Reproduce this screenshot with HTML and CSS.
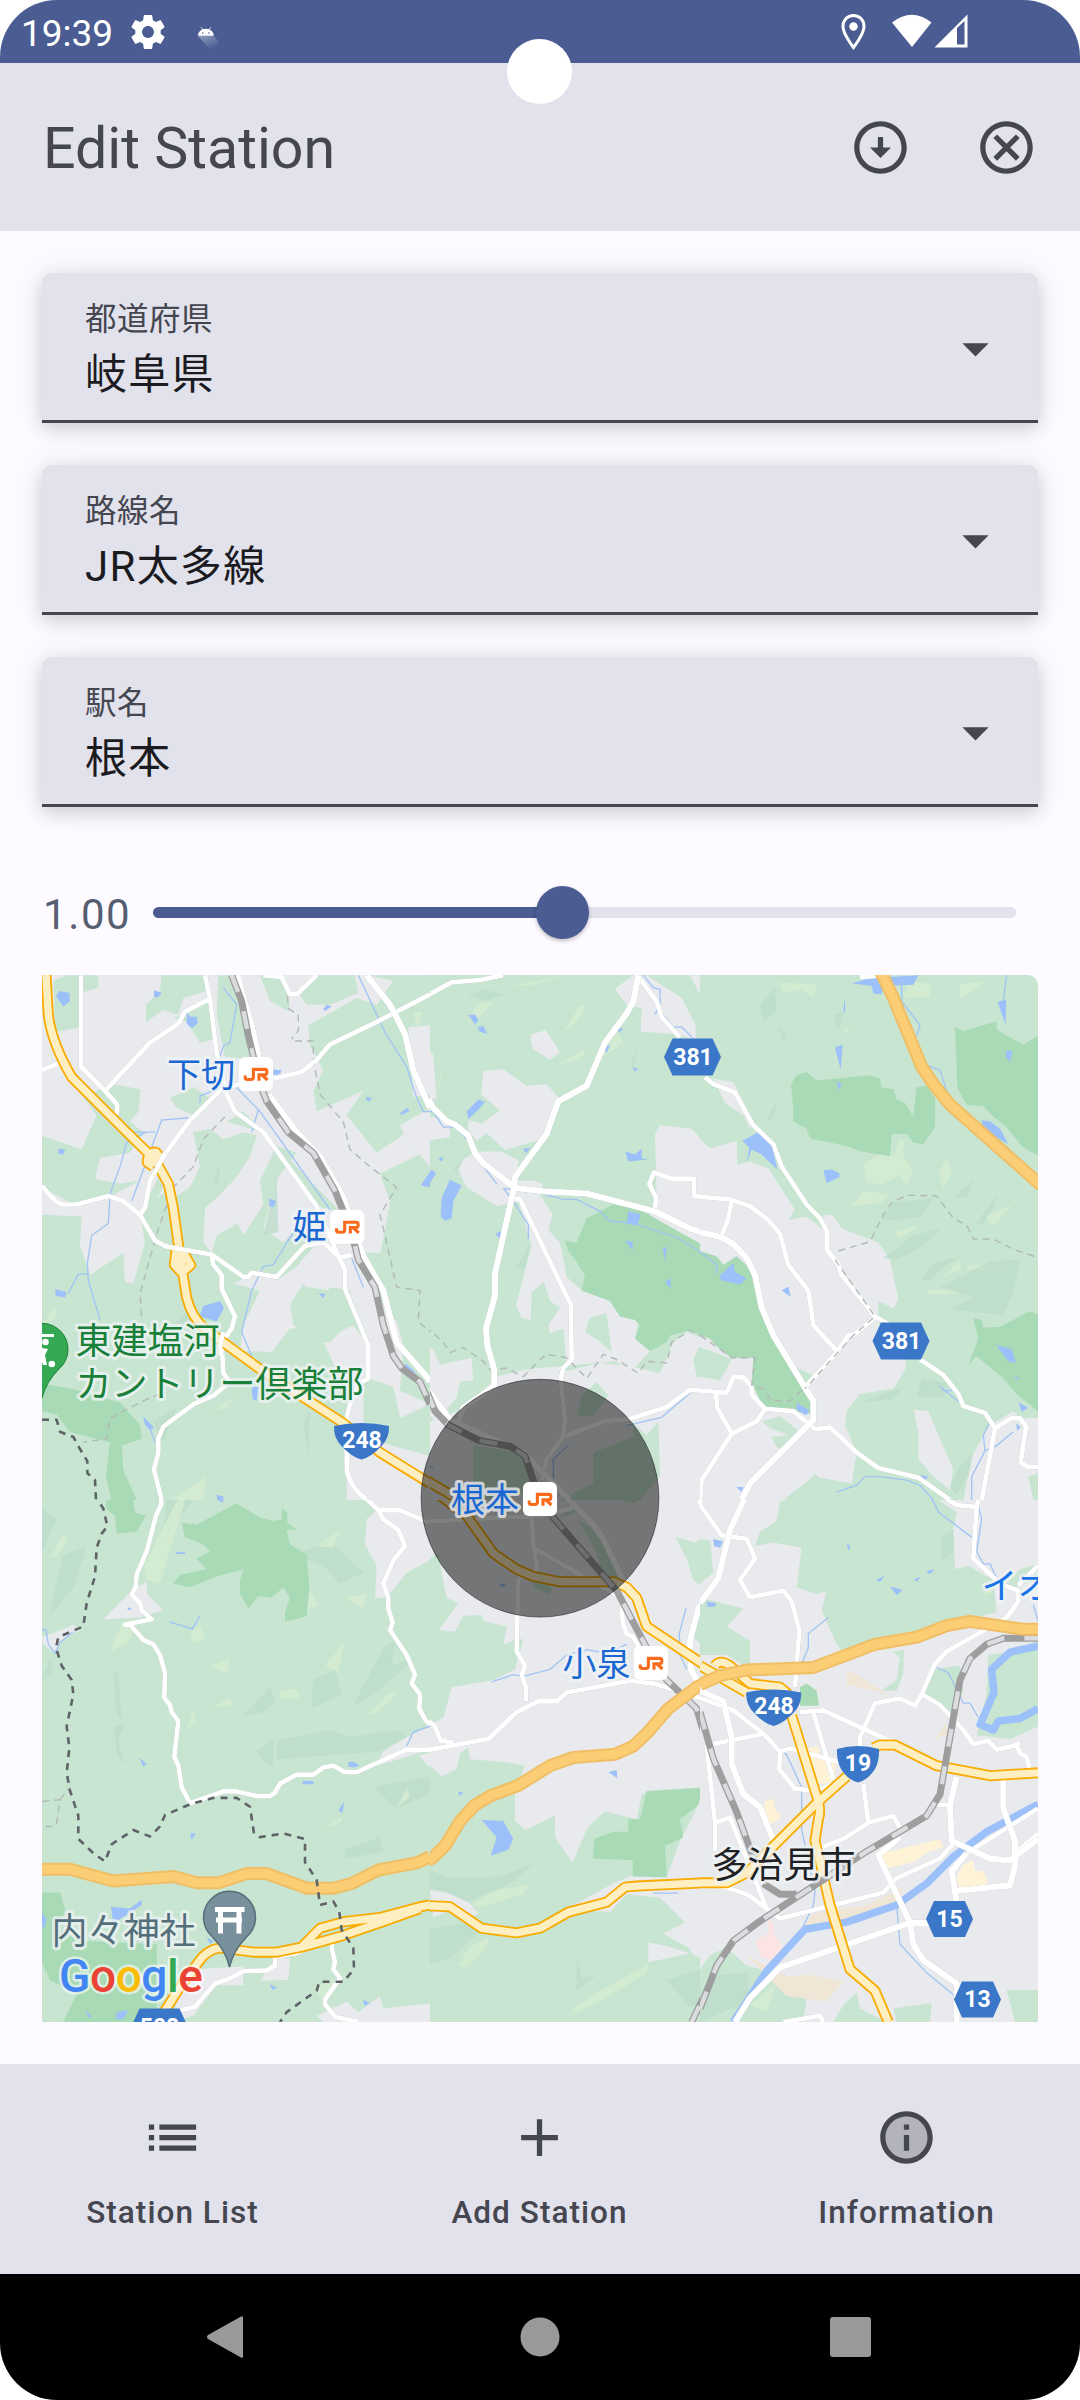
FILE: index.html
```html
<!DOCTYPE html>
<html lang="ja">
<head>
<meta charset="utf-8">
<title>Edit Station</title>
<link rel="stylesheet" href="styles.css">
</head>
<body>
<div class="screen">
  <header class="status">
    <span class="clock">19:39</span>
    <svg class="gear" viewBox="2 2 20 20"><path fill-rule="evenodd" d="M19.43 12.98c.04-.32.07-.64.07-.98s-.03-.66-.07-.98l2.11-1.65c.19-.15.24-.42.12-.64l-2-3.46c-.12-.22-.39-.3-.61-.22l-2.49 1c-.52-.4-1.08-.73-1.69-.98l-.38-2.65C14.46 2.18 14.25 2 14 2h-4c-.25 0-.46.18-.49.42l-.38 2.65c-.61.25-1.17.59-1.69.98l-2.49-1c-.23-.09-.49 0-.61.22l-2 3.46c-.13.22-.07.49.12.64l2.11 1.65c-.04.32-.07.65-.07.98s.03.66.07.98l-2.11 1.65c-.19.15-.24.42-.12.64l2 3.46c.12.22.39.3.61.22l2.49-1c.52.4 1.08.73 1.69.98l.38 2.65c.03.24.24.42.49.42h4c.25 0 .46-.18.49-.42l.38-2.65c.61-.25 1.17-.59 1.69-.98l2.49 1c.23.09.49 0 .61-.22l2-3.46c.12-.22.07-.49-.12-.64l-2.11-1.65zM12 15.5c-1.93 0-3.5-1.57-3.5-3.5s1.57-3.5 3.5-3.5 3.5 1.57 3.5 3.5-1.57 3.5-3.5 3.5z"/></svg>
    <svg class="droid" viewBox="0 0 26 26"><defs><linearGradient id="fade" x1="0" y1="0" x2=".7" y2="1"><stop offset="0" stop-color="#fff" stop-opacity=".4"/><stop offset="1" stop-color="#fff" stop-opacity="0"/></linearGradient></defs><path fill="url(#fade)" d="M1 11L19 11L25 18L20 26H14Z"/><path d="M1 11a9 8 0 0 1 18 0z"/><path d="M4.500 1.500l3 4M15.500 1.500l-3 4" stroke="#fff"/><circle cx="6.500" cy="8" r=".9" fill="#4a5c92"/><circle cx="13.500" cy="8" r=".9" fill="#4a5c92"/></svg>
    <svg class="sys" viewBox="0 0 128 36"><path d="M13.500 1.500C7.500 1.500 3 6 3 12.500C3 20 13.500 33.500 13.500 33.500S24 20 24 12.500C24 6 19.500 1.500 13.500 1.500Z" fill="none" stroke="#fff" stroke-width="3"/><circle cx="13.500" cy="12.500" r="4.200"/><path d="M52 8.500Q72 -7 91.500 8.500L72 33Z"/><path fill-rule="evenodd" d="M94.500 33.500L127.500 .5V33.500ZM117 14V30.500H124.500V7Z"/></svg>
    <i class="camera"></i>
  </header>

  <div class="appbar">
    <h1>Edit Station</h1>
    <svg class="ico" viewBox="0 0 24 24"><path d="M12 4c4.410 0 8 3.590 8 8s-3.590 8-8 8-8-3.590-8-8 3.590-8 8-8m0-2C6.480 2 2 6.480 2 12s4.480 10 10 10 10-4.480 10-10S17.520 2 12 2zm1 10V8h-2v4H8l4 4 4-4h-3z"/></svg>
    <svg class="ico" viewBox="0 0 24 24"><path d="M12 2C6.470 2 2 6.470 2 12s4.470 10 10 10 10-4.470 10-10S17.530 2 12 2zm0 18c-4.410 0-8-3.590-8-8s3.590-8 8-8 8 3.590 8 8-3.590 8-8 8zm3.590-13L12 10.590 8.410 7 7 8.410 10.590 12 7 15.590 8.410 17 12 13.410 15.590 17 17 15.590 13.410 12 17 8.410z"/></svg>
  </div>

  <main>
    <div class="field"><div><label>都道府県</label><p>岐阜県</p></div><svg class="ico" viewBox="0 0 24 24"><path d="M7 10l5 5 5-5z"/></svg></div>
    <div class="field"><div><label>路線名</label><p>JR太多線</p></div><svg class="ico" viewBox="0 0 24 24"><path d="M7 10l5 5 5-5z"/></svg></div>
    <div class="field"><div><label>駅名</label><p>根本</p></div><svg class="ico" viewBox="0 0 24 24"><path d="M7 10l5 5 5-5z"/></svg></div>

    <div class="range"><span>1.00</span><div class="track"><div class="done"></div><div class="thumb"></div></div></div>

    <svg class="map" viewBox="42 975 996 1047">
      <defs>
        <g id="jr"><rect x="-17" y="-17" width="34" height="34" rx="6" fill="#fff"/><path d="M-10.800 1.500V3.200Q-10.800 5.500-8.500 5.500H-5Q-2.600 5.500-2.600 3V-4.600H8.800Q10.800-4.600 10.800-2.800V-1.200Q10.800.7 8.800.7H3V6.800M6 1L11.500 6" fill="none" stroke="#f96b1c" stroke-width="3.100"/></g>
        <path id="hex3" d="M-20-18.500H20L28.500 0L20 18.500H-20L-28.500 0Z"/>
        <path id="hex2" d="M-15.500-18H15.500L23.500 0L15.500 18H-15.500L-23.500 0Z"/>
        <path id="shield3" d="M-27.500-15Q-14-18 0-18T27.500-15Q28-3 20 5Q10 16 0 18.500Q-10 16-20 5Q-28-3-27.500-15Z"/>
        <path id="shield2" d="M-21-15Q-11-18 0-18T21-15Q21.500-3 17 5Q10 16 0 18.500Q-10 16-17 5Q-21.500-3-21-15Z"/>
        <path id="y-cs" d="M40 0L130 50L200 100L280 205L350 250L400 270L480 285H640L680 300L710 330L740 410L900 510L960 545L1050 590M940 530Q945 505 990 520L1050 555M0 1212L90 1192L150 1195L245 1255L350 1268L420 1255L505 1210L620 1182L675 1140L710 1137L980 1125L1050 1090"/>
        <path id="h-cs" d="M0 1085L50 1078L95 1060L135 1025L180 955L225 910L270 885L355 855L450 800L520 777L645 768L700 745L740 710L805 640L890 580L960 548L1050 532"/>
        <path id="r-cs" d="M455 100L650 310L740 470L800 560L890 640L950 830L1050 1050M875 1518L950 1370L1000 1290L1050 1260"/>
        <path id="y-cn" d="M0 1465L130 1540L180 1568"/>
        <path id="r-cn" d="M0 1175L75 1240L105 1310L145 1350L235 1395L330 1412L375 1440L410 1540"/>
        <path id="y-ws" d="M1150 0L1200 25M395 1500L450 1420L505 1350Q530 1315 570 1310L670 1322H740L815 1308L870 1255L940 1237L1050 1225L1170 1195L1200 1190M815 1308L930 1278L1050 1240L1170 1200"/>
        <path id="h-ws" d="M36 1090H120L250 1123L430 1110L500 1128H565L650 1102H710L830 1143H910L965 1130L1045 1092L1160 1072L1200 1055"/>
        <path id="y-wn" d="M48 44L55 160Q65 240 125 340L290 500L375 580L415 650L430 720L450 860L470 980Q485 1040 530 1075L700 1195L940 1345L1050 1430L1200 1520M370 600L352 588Q352 556 378 558L394 578M440 830L433 885L455 908L482 886L458 845"/>
        <path id="r-wn" d="M605 44L635 120L655 220L670 280L690 360L710 410L775 500L850 560L915 670L940 730L975 830L985 870L1035 950L1060 1060L1090 1150L1115 1185L1170 1225L1200 1290"/>
        <path id="y-es" d="M0 520L140 595M45 520Q60 500 90 520L150 570L240 580L265 600M275 660L350 885Q365 920 355 950L345 1010L390 1190L450 1370L525 1430L565 1518M0 1128H80L140 1100L350 905L440 830M520 750L540 742H585L710 800L870 828L1014 820"/>
        <path id="r-es" d="M0 650L40 780L110 930L165 1070M0 1480L50 1360L100 1290L180 1235L500 1040L680 940L720 880L780 560L810 500L860 460L910 443H1014"/>
        <path id="h-es" d="M0 573L60 548L140 532L340 525L525 460L650 440L740 408L810 396L970 418H1020"/>
        <path id="h-en" d="M535 20L580 110L665 310L700 360L750 420L1024 655"/>
      </defs>

      <!-- centre, south -->
      <svg x="400" y="1480" width="350" height="560" viewBox="0 0 1050 1568" preserveAspectRatio="none">
        <rect class="land" width="1050" height="1568"/>
        <path class="green" d="M220 0H350V30L280 60L220 20ZM500 0H780L775 20L700 65L600 45ZM530 110L600 150L660 285L640 285L600 250L590 200ZM480 105L520 70L530 90ZM390 270L455 300L450 320L400 300ZM0 280L60 235L115 205L125 260L140 330L175 345L117 420L165 425L190 380L245 378L250 395L320 410L310 460L340 450L370 445L345 530L280 560L155 580L130 665L80 690L20 740L0 770ZM0 765L60 760L80 790L125 830L170 810L180 765L205 750L210 782L320 790L375 800L345 870V955L375 980L465 940V1000L517 1070L565 970L615 928L710 950L725 885L740 870L910 860L890 920L840 1010L800 1112L700 1105L640 1130L500 1200L630 1210L680 1160L780 1170L855 1240L790 1270L865 1310L880 1330L960 1360L1050 1330V1518H0ZM825 158L885 175L905 165L935 190V260L920 310L880 280L860 220ZM930 320L1050 365V480L1000 500L930 480L880 440L910 350Z"/>
        <path class="land" d="M90 1148L150 1158L205 1182L238 1215L210 1222L160 1200L100 1225ZM25 1460L75 1467L50 1518H30ZM745 1295L800 1305L870 1325L800 1340L745 1350Z"/>
        <path class="dark" d="M0 1060L150 1115L300 1110L400 1075L330 1130L200 1180L130 1150L0 1130ZM0 1240L60 1260L200 1240L240 1260L150 1340L0 1380ZM530 1345L545 1395L590 1385L530 1430ZM800 1400L900 1370L920 1460L870 1475ZM0 1400L60 1385L80 1440L0 1440Z"/>
        <path class="light" d="M175 1360L205 1310L265 1280L262 1305L200 1365ZM520 1480L600 1430L745 1355L740 1380L620 1450L515 1498ZM210 1190L280 1150L390 1132L370 1160L250 1195ZM0 890L28 870L0 930ZM0 1300L50 1260L40 1350L0 1380Z"/>
        <path class="park" d="M740 872L905 862L895 910L840 950L850 1000L795 1025L800 1112L698 1110V1065L580 1060L582 1005L640 985H685V950L720 950Z"/>
        <path class="water" d="M245 952L310 955L340 1005L325 1035L272 1052L290 1000ZM625 818L650 812L652 835ZM940 165L970 175L960 190L940 185ZM920 340L948 345L945 355L922 355ZM295 290L318 292L308 300ZM175 872L190 875L178 885ZM985 1518L1050 1430V1470L1015 1518Z"/>
        <path class="stream" d="M275 565L340 545L370 550L450 530L500 490L560 475L620 485L680 460M858 358L838 430L840 490L860 530M760 1157H835M1005 1325L1045 1340M0 750L40 705L85 690"/>
        <g class="roads"><path d="M0 765L30 755H90L265 725L350 650L415 620H470L500 595L690 562L760 570L900 610L1000 640L1050 690M0 85L60 118L170 112L420 100L520 78M0 140L15 185L0 205M0 465L45 545L38 570L60 600V635L75 665L105 690L122 730L160 735M355 275L350 480L375 520L365 545L378 580V620M395 105L400 180L412 250L355 275M400 190L560 275L645 320L665 335L668 400L680 430L700 440L735 500M910 0L898 60L962 155H1025L1050 175M1050 270L1020 280V305L1050 335M935 740L1050 718M915 740L945 960L940 1110M945 960L985 945L1050 1090M930 1130L1050 1165"/></g>
        <g class="roads wide"><path d="M450 0L580 125L610 165L680 300L750 400M1050 20L985 160L960 275L895 360L870 450L872 530L890 560L965 620L995 720V795L1035 880L1050 895M690 310L750 400"/></g>
        <use class="y1" href="#y-cs"/><use class="y2" href="#y-cs"/>
        <use class="rail" href="#r-cs"/><use class="tie" href="#r-cs"/>
        <use class="h1" href="#h-cs"/><use class="h2" href="#h-cs"/>
      </svg>

      <!-- centre, north -->
      <svg x="400" y="960" width="350" height="540" viewBox="0 0 1050 1568" preserveAspectRatio="none">
        <rect class="green" width="1050" height="1568"/>
        <path class="land" d="M0 44H50L0 130ZM15 190L60 200L65 245L100 275L110 405L75 400L40 350L5 330ZM390 218L437 203L480 268L450 290L397 258ZM250 322L310 317L380 365L440 360L475 400L445 515L315 552L260 503L230 525L205 495V465L245 475L300 437L243 390ZM0 460L100 455L150 480V515L80 525L35 550L55 590L45 625L0 655ZM185 580L230 557L300 555L355 580L350 640L400 640L430 650L420 680L458 740L445 785L480 820L500 920L545 960L630 990L660 1035L715 1045L705 1100L750 1135L690 1200L650 1165L360 1190L470 1200L500 1180L490 1070L450 1085L445 1060L480 1010L450 990L432 935L395 965L392 1045L365 1040L348 1005L375 900L395 830L355 700L290 715L200 660L175 610ZM0 1090L60 1110L100 1130L120 1175L215 1155L220 1220L180 1225L170 1270L110 1340L0 1250ZM650 80L700 44H740L845 110L887 190V232L830 215L722 208L725 140L680 130L645 85ZM780 480L875 490L930 547L1010 525L1012 595L1050 590V880L1020 860L970 885L935 845L830 805L745 750L770 700L765 505ZM940 345L1000 355L1050 430V490L1020 450L970 415ZM360 1192L470 1200L600 1170L700 1180L780 1200L820 1110L860 1080L910 1100L880 1160L890 1210L960 1218L985 1160L1050 1150V1568H0V1440L80 1400L90 1340L200 1300L290 1210ZM870 44H910L900 100Z"/>
        <path class="green" d="M530 1322L545 1265L590 1225L625 1265L580 1325ZM220 1408L350 1430L400 1480V1540L300 1568H220ZM580 1430L700 1385L700 1345L740 1380L775 1340L780 1500L720 1568H480L580 1520ZM555 1080L568 1040L620 1025L635 1138L595 1105ZM0 1310L80 1360L85 1400L0 1440Z"/>
        <path class="light" d="M37 150L70 150L45 205ZM230 125L285 120L240 165L205 180ZM540 130L560 135L520 190L490 210ZM460 310L560 255L545 285ZM620 250L650 205L670 240L600 285ZM110 370L130 310L120 365ZM330 75L500 44L390 75ZM945 44L1050 44L985 95Z"/>
        <path class="dark" d="M205 102L250 85L310 100L260 118ZM350 890L390 825L375 900ZM695 300L710 250L700 325ZM160 610L205 555L170 615ZM10 700L45 640L20 690Z"/>
        <path class="park" d="M495 815L530 820L560 750L640 710L720 725L940 845L970 885L1020 860L1050 880V1155H985L940 1105L870 1075L810 1090L800 1110L750 1135L705 1100L720 1060L705 1045L660 1035L630 990L545 960L555 915L525 870L505 845Z"/>
        <path class="water" d="M205 160L225 158L235 175L225 187ZM232 195L250 192L262 215L240 208ZM200 440L235 405L255 412L235 435L205 462ZM63 655L95 608L108 620L85 655ZM125 690L150 638L185 655L160 700L155 750L135 757L122 745ZM285 795L305 787V815ZM675 555L705 565L725 548V575L742 580L685 585ZM685 730L722 738L712 772L680 765ZM675 815L698 818V843ZM788 835L800 835L795 875ZM795 935L812 925V955ZM960 915L1000 880L1005 905L1040 925L1020 942L962 930ZM610 255L632 245L620 270ZM655 195L670 200L655 212ZM15 1170L50 1200L35 1205L18 1190ZM1030 525L1050 515V580L1040 585ZM115 578L130 570L125 585ZM0 440L25 430L20 445ZM368 548L390 545L380 562ZM700 310L716 318L702 323ZM1010 1530H1028L1020 1545Z"/>
        <path class="stream" d="M0 280L20 310L45 400L65 440H100L130 485H165L200 520M235 580L290 650M310 663L340 700L385 770L385 810M310 663L430 680L490 695H530L600 730L630 758L700 765L830 805L930 865L950 885V910M730 44L760 80L780 85V130L765 158M790 160L820 195H845L880 228M680 1352L785 1328L870 1257M505 1408L460 1450V1520M60 1455L100 1475"/>
        <path class="admin" d="M0 955L40 948L60 970L50 1040L130 1110L150 1140L190 1125L250 1165L270 1190L320 1185L370 1210L420 1160L440 1145L500 1155L560 1215L610 1145L650 1160L715 1200L740 1165L800 1170L815 1110L870 1075L940 1110L990 1155H1050"/>
        <g class="roads"><path d="M0 145L155 65L240 58L310 44M345 695H360L512 1000L515 1160L490 1185L482 1215L495 1335L488 1385L440 1450L425 1510M720 55L770 120L785 165L840 225M915 340L940 355L1000 385L1050 455M765 725L768 690L748 650L762 617L815 635H882V685L990 695L1050 712M990 700L980 760L965 800M488 1385L620 1338L690 1332L800 1298L870 1248L975 1255L1000 1212H1030L1050 1240M948 1255L950 1290L990 1370L1050 1345M990 1375L905 1515V1568"/></g>
        <g class="roads wide"><path d="M0 185L20 220L45 335L100 430L140 468L165 478L205 510L225 560L250 590L345 662L430 672L560 678L765 730L875 782L965 805L1000 825L1035 860L1050 890M715 44L700 120L680 155L615 240L560 365L475 410L440 505L345 630L342 662L285 910V975L258 1070L262 1120L283 1190V1235L265 1250L190 1300L175 1345M0 1120L70 1205L85 1250L150 1335L370 1430L470 1530L510 1568M1050 1510L1025 1568"/></g>
        <use class="y1" href="#y-cn"/><use class="y2" href="#y-cn"/>
        <use class="rail" href="#r-cn"/><use class="tie" href="#r-cn"/>
      </svg>

      <!-- west, south -->
      <svg x="30" y="1480" width="400" height="560" viewBox="0 0 1200 1568" preserveAspectRatio="none">
        <rect class="green" width="1200" height="1568"/>
        <path class="land" d="M960 0H1200V225L1130 260L1070 330H1035L1040 240L1005 180L1010 110L1040 85ZM350 285L352 320L400 365L330 385L220 390L305 310ZM36 440L80 425L130 405L150 420L90 450L75 485L40 460ZM1130 720L1200 690V755L1040 800L1060 760ZM1165 770L1200 765V805ZM480 1370L640 1362V1415L560 1415L490 1500L420 1518L450 1440ZM740 1335L780 1340L775 1400L690 1402ZM860 1500L950 1460L985 1490L1050 1445L1060 1480L1200 1465V1518H880Z"/>
        <path class="dark" d="M740 730L900 700L960 720L1100 700L1130 720L1040 760L740 782ZM965 640L1060 470L1095 450L1085 520L1150 500L1060 580L960 640ZM640 660L720 580L735 620L700 650ZM250 535L265 540L275 680L258 650ZM680 760L730 725V800L700 790ZM850 560L915 530L935 600L845 640ZM100 210L170 185L130 300L60 380L80 280ZM410 50L490 0H540L400 160ZM940 1035L1050 1000L1060 1040L950 1060ZM1030 860L1200 830V880L1100 920ZM36 560L60 500L70 540ZM790 210L900 170L1000 260L930 290L880 240ZM250 690L285 680L265 730L282 800L262 770ZM36 80L80 110L36 200Z"/>
        <path class="light" d="M1005 660L1070 600L1112 590L1040 650ZM750 590L800 585L812 610L750 612ZM540 640L600 610L610 630ZM340 240L440 60L470 45L390 290L350 280ZM60 220L100 150L115 165L80 215ZM780 350L840 310L865 350L800 375ZM480 430L510 400L525 440L490 460ZM885 520L945 450L925 540ZM240 480L275 400L320 410L290 460ZM470 700L490 640L500 675ZM1100 920L1130 860L1140 885ZM870 980L940 940L930 960ZM540 520L600 500L590 540ZM860 185L930 140L910 190ZM850 1420L950 1385L880 1460ZM940 330L1010 320L1000 360Z"/>
        <path class="park" d="M235 0H300L315 90L348 100L320 145L260 150L255 100L228 80ZM455 120L500 125L620 65L690 105L730 115L755 110V80L772 90V120L800 138L770 140L780 180L830 210L838 300L830 380L800 390L765 395V370L780 330L760 300L725 330L685 325L655 360L630 320V280L640 250L560 270L520 285L480 300L430 290L450 265L530 250L500 220L540 200L520 180L465 160ZM36 1155H90L105 1200L90 1260L150 1290L380 1300V1518H100L140 1440L60 1400L36 1350Z"/>
        <path class="water" d="M560 38L582 48L578 64L562 55ZM243 1195L300 1200L335 1175V1190L250 1242ZM925 925L942 900L938 932ZM955 790L968 788L988 798L975 805L955 802ZM818 843H850V852H818ZM480 990H497L485 1008ZM328 778L350 795L340 802ZM438 202H465V207H438ZM293 358H303V363H293ZM718 1412L742 1422L728 1428ZM1000 1455L1020 1465L1003 1472ZM36 1210L50 1230L42 1255L36 1250ZM260 1490L295 1485L280 1510H258ZM165 1485L185 1500L178 1508ZM530 1280L550 1290L540 1300Z"/>
        <path class="stream" d="M36 420H48L55 460L75 485L90 455L130 425M418 397L487 417L510 380M1200 690L1150 705L1130 745"/>
        <path class="admin" d="M36 900L90 895L80 960L75 970H36M90 895L120 860"/>
        <g class="roads"><path d="M380 0L395 65L378 100L350 200L320 265L317 300L305 320L330 345L335 365L365 390L285 405H300L340 448L370 460L390 490L405 540L403 610L420 630L425 650L445 675L433 775L445 800L455 860L480 905L580 872H620L680 885H720L735 875L750 850L800 825H850L880 805L910 800L945 818H980L1130 755H1200M960 0L985 30L1045 85L1060 110L1105 140L1125 185L1090 225L1060 290L1075 330V360L1088 400L1080 420L1130 490L1155 545L1145 570L1170 600L1168 640L1185 670L1200 685M1045 85H1110L1200 120M450 1485L495 1475L555 1410L600 1395L640 1375L710 1373L735 1360V1335L800 1325L860 1300L910 1280L905 1310L915 1350L910 1370L930 1395L885 1455V1468L915 1503L985 1518"/></g>
        <use class="y1" href="#y-ws"/><use class="y2" href="#y-ws"/>
        <use class="h1" href="#h-ws"/><use class="h2" href="#h-ws"/>
        <path class="border" d="M195 0L198 50L220 80L232 130L215 150L200 190L195 270L170 345L160 410L85 440L78 470L95 520L125 560L130 600L110 690L118 750L110 820L120 870L145 940V1005L190 1045L225 1068L245 1020L310 980L360 998L390 970L405 938L480 908L550 890H620L660 915L672 990L690 1000L760 990L825 1005V1070L860 1120L870 1190L910 1180L928 1210L935 1260L970 1310L972 1370L940 1405H868L860 1430L770 1490L750 1518"/>
      </svg>

      <!-- west, north -->
      <svg x="30" y="960" width="400" height="540" viewBox="0 0 1200 1568" preserveAspectRatio="none">
        <rect class="land" width="1200" height="1568"/>
        <path class="green" d="M70 60L110 44H205V80L155 95L150 195L75 210ZM395 44H520L530 90L460 110L445 160L400 145L348 180V130L390 90ZM430 170L545 120L550 230L510 240L470 180ZM565 44H610L650 200L660 290L585 280L560 160ZM36 510L155 550L200 450L160 400L240 360L332 375L325 440L300 470L340 500L300 560L210 575L195 635L270 650L330 640L235 690L140 715L36 660ZM36 740L155 745L150 830L180 915L280 850L285 935L310 940L345 820L330 740L400 600L430 690L480 660L510 600L490 500L540 490L580 520L645 500L680 510L660 570L600 660L610 740L640 800L700 710L690 640L740 540L800 560L745 630L700 780L760 820L790 790L880 800L800 890L740 930L690 900L610 940L690 960L640 1060L630 1135L725 1138L780 1070L870 1060L850 1000L820 950L840 950L960 970L1015 1100V1230L950 1290V1568H36ZM770 60L780 150L720 120L690 44H740ZM800 90L840 60L870 44H975L985 95L900 130L830 130ZM835 190L980 110L1040 130L1090 60L1010 44H1200V1290L1110 1250L1120 1120L1050 860L1080 700L1050 620L1180 560L1130 500L1040 560L950 450L1000 380L860 440L850 380L880 320L840 250ZM420 400L490 370L540 400L500 455L440 430ZM590 470L640 440L930 730L860 715L700 500ZM1000 850L1060 850L1110 1000L1140 1100L1060 1000Z"/>
        <path class="land" d="M525 720L560 690L620 630L630 760L560 800L545 850L520 820ZM1135 195L1200 190V390L1150 400ZM1110 480L1200 430V600L1130 520ZM380 690L440 600L490 550L480 620L430 660ZM740 960L800 930L850 1000L880 1070H770L700 1120L640 1120L690 1000ZM900 1110L960 1050L1010 1110V1230L950 1250L880 1110ZM950 1400L1100 1450L1200 1480V1568H970Z"/>
        <path class="green" d="M780 1000L820 940L870 1000L900 950L960 960L970 1060L870 1110L790 1060ZM1000 1210L1090 1240L1110 1330L1200 1290V1440L1050 1400L1000 1340Z"/>
        <path class="light" d="M36 1060L75 1005L80 1040ZM540 1310L620 1265L590 1300ZM420 1568L530 1500L520 1568ZM1150 150L1180 150L1160 200Z"/>
        <path class="dark" d="M370 1340L440 1300L400 1400ZM820 1340L840 1310L835 1440ZM550 640L570 590L565 650ZM700 800L740 640L745 790ZM430 1060L480 1010L500 1060Z"/>
        <path class="park" d="M36 1230L150 1250L270 1285L330 1350L335 1390L275 1410L280 1480L320 1568H245L228 1500L240 1400L180 1385L120 1370L80 1320L36 1310Z"/>
        <path class="water" d="M78 105L88 90L118 95L120 120L100 135ZM372 88L395 95L385 108H372ZM470 150L480 165L500 165L503 185L485 198L470 185ZM85 548L105 550L100 565L85 562ZM718 692L738 700L732 718L718 715ZM520 1005L570 990L582 1010L560 1050L508 1035ZM75 955L110 965L105 980L78 975ZM1172 655L1200 615V660ZM340 1325L372 1358L360 1365L345 1350ZM730 318L755 320L750 332L730 335ZM1005 398L1027 400L1015 412ZM880 143L890 130L905 135L885 148ZM1110 445L1130 430L1140 438L1115 450ZM865 968L885 970L880 982ZM1125 1170L1160 1200L1125 1190ZM665 1240H685L680 1280L668 1275ZM560 1553L580 1558V1568H562Z"/>
        <path class="stream" d="M475 458L395 465L370 530L340 610L305 700M310 500H375M345 502L290 530L270 600L240 680L235 765L185 800L172 880L175 930L210 1045M115 968L145 912H172M620 370L690 440L900 725M985 44L1065 210L1130 310L1160 400L1180 440H1200M790 790L730 885L700 890L665 960L635 1080L665 1150M580 80L620 130L600 240L580 250L570 280M965 865L1000 950M375 1400L360 1360M685 435L665 500M575 370L510 395V415"/>
        <path class="admin" d="M770 70L775 140L805 160V205L785 230M795 235H850L850 290L870 390L940 470L960 550L1020 600L1100 660L1050 740L1065 800L1100 950L1170 960L1165 1050L1200 1080M585 455L520 520L490 600L430 660L385 780L350 900L330 970L335 1040M390 1260L340 1280L240 1330L230 1390L160 1400"/>
        <g class="roads"><path d="M153 44V310L225 380L262 420V440L250 460M36 320L90 298M225 380L360 240L445 185L465 150L540 112M525 44L540 112L560 270L590 390L615 440L700 500L860 715L930 870L945 900V955L1015 1120V1215L985 1230L960 1290L950 1330V1480Q960 1530 1010 1568M630 360L575 375L480 465L415 550L360 640L345 720L330 740M36 655Q70 700 95 710H140L235 685L280 700L330 740L375 815L410 832L545 855L640 920H655L665 908L740 920L825 830L880 820L930 865L965 855M545 860L550 885L575 915V955L615 1035L605 1070L575 1110L580 1200L600 1225L550 1265L490 1290L400 1355L385 1390V1430L372 1480L395 1568M730 345L815 325L860 290L900 245L1030 185L1200 100M700 44L755 50L780 100H800L860 44"/></g>
        <g class="roads wide"><path d="M1010 44L1080 130L1125 215L1150 320L1200 430M622 44L640 110L665 190L690 300M715 390L800 500L870 570L940 690L1000 860L1060 960L1100 1110L1190 1210L1200 1225"/></g>
        <use class="y1" href="#y-wn"/><use class="y2" href="#y-wn"/>
        <g class="roads"><path d="M405 560L370 625M400 830L500 848M580 1080L570 1120L575 1150"/></g>
        <use class="rail" href="#r-wn"/><use class="tie" href="#r-wn"/>
        <path class="border" d="M36 1335H80L90 1370L130 1385L150 1420L172 1455V1490L195 1510L198 1568"/>
      </svg>

      <!-- east, south -->
      <svg x="700" y="1480" width="380" height="560" viewBox="0 0 1140 1568" preserveAspectRatio="none">
        <rect class="land" width="1140" height="1568"/>
        <path class="green" d="M240 60L340 45L310 20L380 0H640L660 20L770 90L760 140L765 250L805 240L880 280L890 370L800 390L650 440L440 495L410 460L365 365L380 310L350 320L290 300L305 190L220 175L165 185L180 145L230 115ZM730 0H800L770 40ZM0 165L30 170L40 260L0 290ZM0 330L130 360L80 410L150 450V530L80 490L0 490ZM580 480L612 475L610 540L590 590L545 590L590 560L600 500ZM700 530L780 520L790 590L760 660L740 640L665 600ZM865 490L930 480L1014 450V690L930 725L830 715L860 600ZM900 310L960 250L1014 235V280ZM0 1370L30 1330L80 1310L140 1360L230 1380L250 1430L320 1450L310 1518H0ZM430 1470L470 1435L480 1480L560 1518H400ZM580 1480L695 1465L690 1518H590ZM920 1428H1014V1518H945Z"/>
        <path class="dark" d="M0 1430L60 1385L140 1380L150 1470L90 1480L0 1518ZM725 160L760 140L762 200L725 230Z"/><path class="light" d="M150 1470L230 1410L200 1490ZM840 330L880 290L875 315Z"/>
        <path class="park" d="M300 580L320 570L350 590L357 632H300Z"/>
        <path class="shop" d="M325 750L355 745L360 775L410 780L400 850H350ZM193 900L220 892L225 925L243 935L240 950L205 965L225 985L195 960ZM525 1050L720 1005L730 1028L690 1040L640 1070L550 1090ZM770 1110L790 1075L820 1065L825 1095L850 1095L865 1130L780 1150Z"/>
        <path class="sand" d="M440 530L480 550L570 605L530 590L440 575ZM310 1250L340 1215L430 1200L500 1190L610 1140L600 1180L500 1215L380 1245ZM140 1330L260 1390L330 1385L430 1405L380 1460L260 1445L200 1390ZM705 725L735 680L745 710Z"/>
        <path class="rose" d="M165 1290L205 1270V1230L218 1240L225 1275L250 1310L210 1345L185 1335Z"/>
        <path class="river" d="M100 1518L200 1375L315 1258L440 1238L590 1190L680 1130L760 1055L860 985L1014 908M1014 465L930 482L875 530L882 595L840 685L880 700L895 675L960 668L1014 640"/>
        <path class="water" d="M40 165L70 172L60 190L42 185ZM528 280L555 268L540 285ZM570 298L608 308L590 322ZM678 255L705 250L690 264ZM440 178L450 185L447 200ZM20 340L48 345L45 355L22 355ZM642 278L662 270L650 285Z"/>
        <path class="stream" d="M620 0L700 60L715 90L815 160M815 0L845 110L830 200L850 235H870L890 275M385 385L325 430V470L285 560M180 700L260 770L305 860V980L345 1150L340 1190L300 1270M590 1190L600 1300L680 1380L765 1445M410 32L470 10L500 0M710 525L745 540L790 625H810L835 665M1000 350L1014 395"/>
        <g class="roads"><path d="M10 0L0 70L65 155L140 165L165 220L120 280L150 328L250 310L275 340L298 420L285 580M655 0L770 70L830 75M850 0L830 75L820 220L900 290L955 310V340L920 385L740 480L705 515L665 600L720 630L790 700L820 740L865 730L890 755L940 745L960 735M950 745L960 765L980 775L990 815M665 600L645 632L600 612L525 625L480 720V760M1014 240L955 295M0 610L100 645L190 710L240 760L238 810L285 865L350 870L400 850M35 740L185 712M240 760L270 752L420 790M300 650L370 645L580 735M340 650L400 840M490 850L505 960L430 1005L360 1030M505 960L580 940L600 975M20 740L45 960V1040M45 960L90 945L200 1200M0 1130Q100 1140 150 1165L240 1228L550 1155L590 1115L720 1060L760 1018M710 910H745M250 1518L360 1500L370 1518M800 1045L1014 920M1014 990L945 1045"/></g>
        <g class="roads wide"><path d="M160 0L90 140L55 275L0 345M0 590L70 620L95 720V795L130 880L180 915L225 1020M770 830L750 910L755 1010L870 1060L930 1065L1014 1005M800 1045L755 1095L770 1180M910 840V920L945 1010V1080L930 1135L770 1150M600 1000L535 1050L630 1240L640 1300L670 1345L770 1410V1518M105 1518L150 1450L240 1365L630 1240H690"/></g>
        <use class="y1" href="#y-es"/><use class="y2" href="#y-es"/>
        <path class="rail" d="M190 1130L240 1160H290"/><use class="rail" href="#r-es"/><use class="tie" href="#r-es"/>
        <use class="h1" href="#h-es"/><use class="h2" href="#h-es"/>
      </svg>

      <!-- east, north -->
      <svg x="700" y="960" width="380" height="540" viewBox="0 0 1140 1568" preserveAspectRatio="none">
        <rect class="green" width="1140" height="1568"/>
        <path class="land" d="M0 520L30 547L110 525L112 595L150 585L205 605L285 725L265 755L320 745L365 780L370 740L400 742L425 780L535 820L570 870L595 985L580 1012L535 990V1055L620 1160L615 1190L580 1245L480 1260L440 1310L435 1350L470 1430L455 1520L340 1500L250 1568H0ZM40 345L100 355L145 440L152 495L130 450L75 415ZM870 1350L940 1310L960 1330H1014V1490L985 1500L1000 1568H790L815 1440ZM640 1305L685 1310L760 1480L750 1540L700 1500L655 1450V1370Z"/>
        <path class="green" d="M185 1340L240 1325L300 1370L250 1420L230 1415L215 1385L265 1380L210 1358ZM290 1568L345 1490L365 1515L340 1560L460 1520L500 1568ZM0 1125L60 1145L95 1160L60 1220L0 1210ZM290 1185L340 1205L325 1240Z"/>
        <path class="light" d="M490 595L540 560L600 570L590 630L540 655L500 640ZM595 525L612 520L610 570L640 610L620 650L575 600ZM455 715L490 670L570 680L545 705ZM715 620L740 575L755 615L730 665ZM235 65L350 70L340 110L300 85L250 95ZM610 110L630 60L690 70V108H660ZM780 70L860 60L780 115ZM580 790L660 770L600 810ZM850 745L940 710L880 770ZM800 885L915 885L880 905L805 900ZM680 960L790 955L770 970L690 972ZM730 920L780 870L785 895ZM430 205L460 190L435 215Z"/>
        <path class="dark" d="M545 755L580 705L700 692L660 745L590 755ZM550 865L640 800L720 780L670 830L590 870ZM660 930L700 880L780 860L720 900L690 930ZM720 950L870 875L960 870L940 960L910 1030L750 1015L820 980ZM830 765L890 680L880 720L850 765ZM400 160L430 150L415 205ZM235 195L260 215L250 240ZM200 460L235 405L215 470ZM180 130L225 80L230 150L190 180ZM650 1270L665 1215L740 1230L735 1270ZM480 1285L610 1240L580 1275ZM780 1470L820 1430L805 1500L770 1550L750 1530ZM760 690L820 640L800 690Z"/>
        <path class="park" d="M0 845L50 860L70 885L110 860L155 900L165 935L175 1010L310 1230L345 1290L340 1320L280 1310L195 1305L155 1230L160 1155H95L60 1130L30 1100L0 1090ZM273 360L290 335L320 325L350 350L510 335L540 345L545 370L580 375L590 405L615 415L640 455L650 370L680 365L705 400V485L670 535L640 530L620 505H575L570 570L480 555L440 540L330 518L320 490L280 470V430ZM765 195L790 207L890 178V200L920 220L970 245L1014 220V568L970 545L915 480L880 455L850 425L800 420L772 370L770 300ZM820 1040L845 1045L850 1068L900 1065L990 1020L1014 1030V1310L950 1260L910 1215L830 1150L805 1175L835 1100Z"/>
        <path class="water" d="M127 525L175 500L215 535L232 608L185 565L155 550L140 588L148 545ZM370 610L395 608L418 620V630L380 648ZM455 68L500 55L560 50L655 44L640 72L550 75L545 100L520 97L515 75ZM405 255L428 245L422 318ZM893 122L918 115L917 188ZM918 262L938 265L930 295L918 285ZM845 465L870 468L900 490L925 535L880 510L848 485ZM60 915L100 880L105 905L140 925L120 942L62 930ZM245 960L265 948L272 978ZM888 1117L935 1130L948 1170L925 1165ZM955 1285L985 1300L965 1312ZM290 1285L328 1308L318 1322L290 1305ZM660 1495L685 1500L675 1512ZM412 350L425 362L415 378ZM434 105L436 150H430ZM108 1530H130L125 1545ZM940 1210L960 1213L950 1218ZM948 1345L962 1355L952 1368Z"/>
        <path class="stream" d="M605 44V120L660 190L650 220M680 305L720 320L740 380L765 430L790 478M920 44L910 115M0 848L50 885V910M410 1545L470 1525L495 1500H540L620 1510L660 1525L700 1568M815 1568V1500L855 1425L850 1380L870 1340M855 1425L890 1410L940 1370M770 1250H735L720 1240L780 1285"/>
        <g class="roads"><path d="M15 340L40 360L105 385L160 480L220 535L245 600L320 710L360 750L380 785V840L415 885L425 915L525 1035L570 1060M660 1160L730 1205L775 1260L790 1295L855 1315L885 1360L870 1440L845 1568M885 1360L935 1330H960L978 1355L962 1460L985 1472H1014M0 688L90 695L150 715L205 755L240 795L265 885L325 960L340 1060L410 1135M95 700L85 750L65 800M525 1038L460 1090H445L410 1140L315 1240M0 1250L80 1257L100 1212H130L155 1240V1262L195 1303L280 1310L345 1362L390 1357L470 1430L535 1475L655 1503L750 1568M48 1257L52 1300L95 1375L170 1340L195 1303M95 1375L5 1510L0 1568M480 50L530 46"/></g>
        <g class="roads wide"><path d="M0 790L65 805L100 825L140 865L165 915L185 1010L220 1090L320 1250L340 1280V1335L150 1520L125 1568"/></g>
        <path class="admin" d="M415 845L510 818L550 740L575 705L620 683L710 685L760 750L800 770L820 810H880L940 840L1014 864M405 870L525 1035L460 1090L315 1245M0 1090L60 1130L95 1155H165L155 1235L190 1245L215 1280H270L310 1245"/>
        <use class="h1" href="#h-en"/><use class="h2" href="#h-en"/>
      </svg>

      <circle cx="540" cy="1498.200" r="118.900" fill="#000" fill-opacity=".5" stroke="#000" stroke-opacity=".45" stroke-width="1"/>

      <use href="#jr" x="256" y="1074"/><use href="#jr" x="347.300" y="1226.800"/><use href="#jr" x="540" y="1499"/><use href="#jr" x="651" y="1663"/>

      <g class="badge"><use href="#hex3" x="692.500" y="1057"/><use href="#hex3" x="901" y="1341"/><use href="#hex3" x="159.500" y="2027"/><use href="#hex2" x="949.500" y="1919"/><use href="#hex2" x="977.500" y="1999.500"/><use href="#shield3" x="361.500" y="1441"/><use href="#shield3" x="773.700" y="1707.500"/><use href="#shield2" x="858" y="1764"/></g>
      <g class="num"><text x="693" y="1065">381</text><text x="901.500" y="1349">381</text><text x="159.500" y="2035">508</text><text x="949.500" y="1926.500">15</text><text x="977.500" y="2007">13</text><text x="362" y="1447.500">248</text><text x="774" y="1714">248</text><text x="858" y="1771">19</text></g>

      <path d="M42 1398Q38 1382 25 1369A26 26 0 1 1 59 1369Q46 1382 42 1398Z" fill="#34a853" stroke="#188038"/>
      <path d="M38 1335.500H54" stroke="#fff" stroke-width="3"/><g fill="#fff"><circle cx="45.500" cy="1342" r="3.300"/><circle cx="51.800" cy="1364" r="3.300"/><path d="M42 1348L48 1349L45 1355L47 1365H43L42 1362Z"/></g>
      <path d="M229.500 1967Q226 1951 212.500 1937A26 26 0 1 1 246.500 1937Q233 1951 229.500 1967Z" fill="#78909c" stroke="#546e7a" stroke-width="1.500"/>
      <path d="M215 1909.500H244.500M216 1920H242M220.500 1909V1933.500M239 1909V1933.500" fill="none" stroke="#fff" stroke-width="5"/>

      <g class="place blue"><text x="167" y="1087">下切</text><text x="292.500" y="1239">姫</text><text x="451" y="1512">根本</text><text x="562.500" y="1675.500">小泉</text></g>
      <g class="place big"><text class="gr" x="75.500" y="1354">東建塩河</text><text class="gr" x="75.500" y="1397">カントリー倶楽部</text><text class="sl" x="51.500" y="1944">内々神社</text><text class="bk" x="711.500" y="1878">多治見市</text><text class="br" x="981.500" y="1599">イオン</text></g>
      <text class="brand" x="59" y="1992" textLength="144"><tspan fill="#4285f4">G</tspan><tspan fill="#ea4335">o</tspan><tspan fill="#fbbc04">o</tspan><tspan fill="#4285f4">g</tspan><tspan fill="#34a853">l</tspan><tspan fill="#ea4335">e</tspan></text>
    </svg>
  </main>

  <nav class="tabs">
    <div><svg class="ico" viewBox="0 0 24 24"><path d="M3 13h2v-2H3v2zm0 4h2v-2H3v2zm0-8h2V7H3v2zm4 4h14v-2H7v2zm0 4h14v-2H7v2zM7 7v2h14V7H7z"/></svg><span>Station List</span></div>
    <div><svg class="ico" viewBox="0 0 24 24"><path d="M19 13h-6v6h-2v-6H5v-2h6V5h2v6h6v2z"/></svg><span>Add Station</span></div>
    <div><svg class="ico" viewBox="0 0 24 24"><circle cx="12" cy="12" r="9" fill-opacity=".3"/><path d="M11 7h2v2h-2zm0 4h2v6h-2zm1-9C6.480 2 2 6.480 2 12s4.480 10 10 10 10-4.480 10-10S17.520 2 12 2zm0 18c-4.410 0-8-3.590-8-8s3.590-8 8-8 8 3.590 8 8-3.590 8-8 8z"/></svg><span>Information</span></div>
  </nav>

  <footer class="sysnav">
    <svg viewBox="0 0 38 44"><path d="M37 2.500V41.500Q37 43.500 35 42.500L2 24Q0 22 2 20L35 1.500Q37 .5 37 2.500Z"/></svg>
    <svg viewBox="0 0 40 44"><circle cx="20" cy="22" r="19.500"/></svg>
    <svg viewBox="0 0 41 44"><rect y="2" width="41" height="40" rx="3"/></svg>
  </footer>
</div>
</body>
</html>
```
FILE: styles.css
```css
* { box-sizing: border-box; }
body { margin: 0; background: #fff; font-family: Roboto, "Noto Sans CJK JP", sans-serif; color: #45464f; }
.screen { width: 1080px; height: 2400px; border-radius: 57px; overflow: hidden; background: #fdfbff; display: flex; flex-direction: column; }

.status { position: relative; height: 63px; background: #4a5c92; display: flex; align-items: center; padding-left: 21px; fill: #fff; }
.clock { color: #fff; font-size: 37px; line-height: 43px; width: 110px; padding-top: 3px; }
.gear { width: 34px; height: 34px; }
.droid { width: 23px; height: 23px; margin-left: 32px; margin-top: 11px; }
.sys { width: 128px; height: 36px; margin-left: auto; margin-right: 112px; }
.camera { position: absolute; left: 507px; top: 39px; width: 65px; height: 65px; border-radius: 50%; background: #fff; }

.ico { width: 63px; height: 63px; fill: #45464f; display: block; }
.appbar { height: 168px; background: #e1e2ec; display: flex; align-items: center; padding: 0 42px 0 43px; gap: 63px; }
.appbar h1 { margin: 0; flex: 1; font-size: 57.300px; font-weight: 400; line-height: 74px; padding-top: 3px; }

main { padding: 42px 42px 0; height: 1833px; display: flex; flex-direction: column; }
.field { height: 150px; margin-bottom: 42px; background: #e1e2ec; border-radius: 10px 10px 0 0; border-bottom: 3px solid #45464f; box-shadow: 0 6px 18px rgba(0,0,0,.15), 0 0 36px rgba(0,0,0,.08); display: flex; align-items: center; justify-content: space-between; padding: 3px 31px 0 43px; }
.field div { height: 105px; margin-top: 3px; }
.field label { display: block; font-size: 31.500px; line-height: 45px; letter-spacing: .5px; }
.field p { margin: 0; font-size: 42px; line-height: 65px; letter-spacing: 1.300px; color: #1b1b1f; }

.range { height: 126px; display: flex; align-items: center; }
.range span { width: 111px; font-size: 42px; letter-spacing: 1.600px; color: #585e71; padding: 4px 0 0 1px; }
.track { position: relative; width: 863px; height: 11px; border-radius: 6px; background: #e1e2ec; }
.done { width: 410px; height: 11px; border-radius: 6px; background: #4a5c92; }
.thumb { position: absolute; left: 383px; top: -21px; width: 53px; height: 53px; border-radius: 50%; background: #4a5c92; box-shadow: 0 2px 4px rgba(0,0,0,.25); }

.map { flex: none; width: 996px; height: 1047px; display: block; border-radius: 0 10px 0 0; }
.map path { vector-effect: non-scaling-stroke; }
.land { fill: #e8eaed; }
.green { fill: #c7e5d1; }
.park { fill: #a8dab5; }
.dark { fill: #bcdbc8; opacity: .75; }
.light { fill: #d3ebd0; opacity: .9; }
.water { fill: #9cc0f9; }
.shop { fill: #fef3d6; }
.sand { fill: #f0e6d5; }
.rose { fill: #fce4e4; }
.stream { fill: none; stroke: #a1c3f5; stroke-width: 1.300; }
.river { fill: none; stroke: #9cc0f9; stroke-width: 7.500; stroke-linejoin: round; }
.roads { fill: none; stroke: #fff; stroke-width: 4.700; stroke-linejoin: round; filter: drop-shadow(0 .5px .4px rgba(120,125,130,.55)); }
.roads.wide { stroke-width: 6.200; }
.y1, .y2, .h1, .h2, .rail, .tie, .border, .admin { fill: none; stroke-linejoin: round; }
.y1 { stroke: #f9ab00; stroke-width: 11; }
.y2 { stroke: #feefc3; stroke-width: 7.400; }
.h1 { stroke: #f0bf65; stroke-width: 13; }
.h2 { stroke: #fbcd75; stroke-width: 9; }
.rail { stroke: #9e9e9e; stroke-width: 7; }
.tie { stroke: #dadce0; stroke-width: 4.400; stroke-dasharray: 18 20; }
.border { stroke: #5f6368; stroke-width: 2.600; stroke-dasharray: 7 6; }
.admin { stroke: #b3b9b7; stroke-width: 1.400; stroke-dasharray: 7 5; }
.badge { fill: #3a77c8; }
.num { fill: #fff; font: 700 23px Roboto, sans-serif; text-anchor: middle; }
.place { font-family: "Noto Sans CJK JP", sans-serif; font-size: 34px; stroke: rgba(240,244,246,.75); stroke-width: 6px; stroke-linejoin: round; paint-order: stroke; }
.place.big { font-size: 36px; }
.blue { fill: #1967d2; }
.gr { fill: #188038; }
.sl { fill: #546e7a; }
.bk { fill: #202124; }
.br { fill: #1a73e8; }
.brand { font: 500 46px Roboto, sans-serif; stroke: rgba(255,255,255,.6); stroke-width: 5px; stroke-linejoin: round; paint-order: stroke; }

.tabs { height: 210px; background: #e1e2ec; display: grid; grid-template-columns: repeat(3, 345px); column-gap: 22px; }
.tabs div { display: flex; flex-direction: column; align-items: center; padding-top: 42px; }
.tabs span { margin-top: 23px; font-size: 31.500px; line-height: 42px; font-weight: 500; letter-spacing: 1.050px; }

.sysnav { height: 126px; background: #000; display: flex; align-items: center; fill: #999; padding-left: 206px; }
.sysnav svg { height: 44px; }
.sysnav svg:nth-child(1) { width: 38px; margin-right: 276px; }
.sysnav svg:nth-child(2) { width: 40px; margin-right: 270px; }
.sysnav svg:nth-child(3) { width: 41px; }
```
